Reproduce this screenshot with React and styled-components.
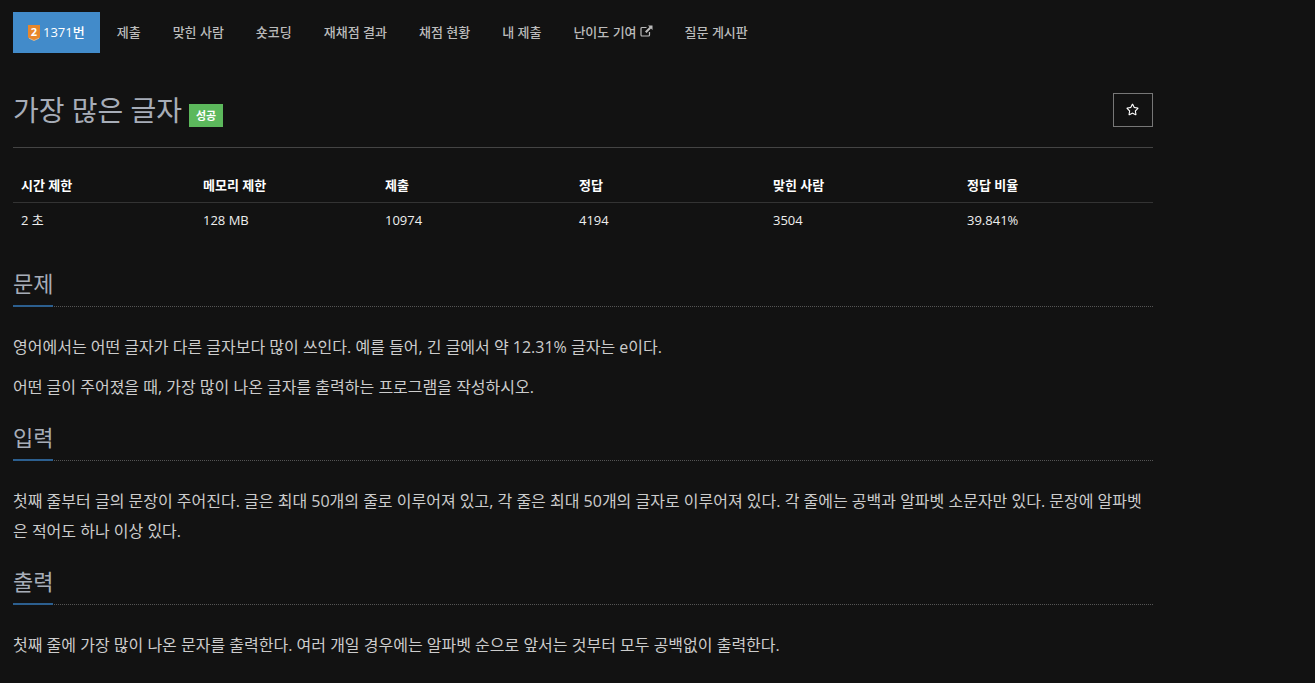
import React from "react";
import styled, { createGlobalStyle } from "styled-components";
import { FaRegStar } from "react-icons/fa";

const tabs = ["제출", "맞힌 사람", "숏코딩", "재채점 결과", "채점 현황", "내 제출"];

const stats = [
  { label: "시간 제한", value: "2 초", width: 182 },
  { label: "메모리 제한", value: "128 MB", width: 182 },
  { label: "제출", value: "10974", width: 194 },
  { label: "정답", value: "4194", width: 194 },
  { label: "맞힌 사람", value: "3504", width: 194 },
  { label: "정답 비율", value: "39.841%", width: 194 },
];

const App = () => {
  return (
    <Page>
      <GlobalStyle />
      <Nav>
        <ActiveTab>
          <TierBadge viewBox="0 0 12 16">
            <path d="M0 0h12v12.5L6 15.5 0 12.5z" fill="#e8872b" />
            <path d="M1 13.2l5 2.3 5-2.3" fill="none" stroke="#f7c48c" strokeWidth="0.8" />
            <text x="6" y="10.500" textAnchor="middle" fontSize="11" fontWeight="700" fill="#fff">
              2
            </text>
          </TierBadge>
          1371번
        </ActiveTab>
        {tabs.map((tab) => (
          <Tab key={tab}>{tab}</Tab>
        ))}
        <Tab>
          난이도 기여
          <LinkIcon viewBox="0 0 13 12">
            <path d="M9.5 7v3a1 1 0 0 1-1 1H2a1 1 0 0 1-1-1V3.5a1 1 0 0 1 1-1h4.500" fill="none" stroke="currentColor" strokeWidth="1.2" />
            <path d="M8 0.5h4.500V5L11 3.500 6.500 8 5 6.500 9.500 2z" fill="currentColor" />
          </LinkIcon>
        </Tab>
        <Tab>질문 게시판</Tab>
      </Nav>

      <Header>
        <Title>
          가장 많은 글자 <Label>성공</Label>
        </Title>
        <StarButton>
          <FaRegStar size={13} />
        </StarButton>
      </Header>

      <Stats>
        <thead>
          <tr>
            {stats.map((s) => (
              <Th key={s.label} style={{ width: s.width }}>
                {s.label}
              </Th>
            ))}
          </tr>
        </thead>
        <tbody>
          <tr>
            {stats.map((s) => (
              <Td key={s.label}>{s.value}</Td>
            ))}
          </tr>
        </tbody>
      </Stats>

      <Section>
        <Headline>
          <h2>문제</h2>
        </Headline>
        <Body>
          <p>영어에서는 어떤 글자가 다른 글자보다 많이 쓰인다. 예를 들어, 긴 글에서 약 12.31% 글자는 e이다.</p>
          <p>어떤 글이 주어졌을 때, 가장 많이 나온 글자를 출력하는 프로그램을 작성하시오.</p>
        </Body>
      </Section>

      <Section>
        <Headline>
          <h2>입력</h2>
        </Headline>
        <Body>
          <p>
            첫째 줄부터 글의 문장이 주어진다. 글은 최대 50개의 줄로 이루어져 있고, 각 줄은 최대 50개의 글자로 이루어져 있다. 각 줄에는 공백과 알파벳 소문자만 있다. 문장에 알파벳은 적어도 하나 이상 있다.
          </p>
        </Body>
      </Section>

      <Section>
        <Headline>
          <h2>출력</h2>
        </Headline>
        <Body>
          <p>첫째 줄에 가장 많이 나온 문자를 출력한다. 여러 개일 경우에는 알파벳 순으로 앞서는 것부터 모두 공백없이 출력한다.</p>
        </Body>
      </Section>
    </Page>
  );
};

const GlobalStyle = createGlobalStyle`
  html, body {
    margin: 0;
    padding: 0;
    background: #121212;
    height: 683px;
    overflow: hidden;
  }

  body {
    font-family: "Open Sans", "Noto Sans CJK KR", sans-serif;
    color: #ccc;
  }
`;

const Page = styled.div`
  width: 1140px;
  margin-left: 13px;
  padding-top: 12px;
`;

const Nav = styled.nav`
  display: flex;
  height: 41px;
`;

const Tab = styled.a`
  display: flex;
  align-items: center;
  gap: 2px;
  padding: 0 16px 2px;
  font-size: 13px;
  font-weight: 500;
  color: #bbb;
  white-space: pre;
`;

const ActiveTab = styled(Tab)`
  gap: 3px;
  margin-right: 1px;
  padding: 0 15px 2px;
  background: #428bca;
  color: #fff;
`;

const TierBadge = styled.svg`
  width: 12px;
  height: 16px;
  margin-top: 2px;
  overflow: visible;
`;

const LinkIcon = styled.svg`
  width: 13px;
  height: 12px;
  margin: -2px 0 0 1px;
`;

const Header = styled.div`
  display: flex;
  justify-content: space-between;
  align-items: flex-start;
  height: 94px;
  margin-bottom: 20px;
  border-bottom: 1px solid #444;
  box-sizing: content-box;
`;

const Title = styled.h1`
  margin: 38px 0 0;
  font-size: 28px;
  line-height: 38px;
  font-weight: 400;
  color: #a7adb8;
  white-space: pre;
`;

const Label = styled.span`
  display: inline-block;
  padding: 0 6.5px;
  height: 23px;
  line-height: 23px;
  background: #5cb85c;
  color: #fff;
  font-size: 11px;
  font-weight: 700;
  vertical-align: 1px;
`;

const StarButton = styled.button`
  display: flex;
  align-items: center;
  justify-content: center;
  width: 40px;
  height: 34px;
  margin-top: 40px;
  padding: 0 2px 2px 0;
  background: transparent;
  border: 1px solid #777;
  color: #fff;
`;

const Stats = styled.table`
  width: 1140px;
  margin-bottom: 30px;
  border-collapse: collapse;
  table-layout: fixed;
`;

const Th = styled.th`
  box-sizing: border-box;
  padding: 8px;
  font-size: 13px;
  font-weight: 700;
  line-height: 18px;
  text-align: left;
  color: #fff;
  border-bottom: 1px solid #333;
`;

const Td = styled.td`
  padding: 8px;
  font-size: 13px;
  line-height: 19px;
  color: #eee;
`;

const Section = styled.section`
  margin-top: 20px;
`;

const Headline = styled.div`
  border-bottom: 1px dotted #555;

  h2 {
    display: inline-block;
    margin: 0 0 -1px;
    padding-bottom: 7px;
    width: 40px;
    font-size: 22px;
    line-height: 30px;
    font-weight: 400;
    white-space: nowrap;
    color: #a7adb8;
    border-bottom: 2px solid #2c5f8f;
  }
`;

const Body = styled.div`
  padding-top: 25px;

  p {
    margin: 0 0 10px;
    font-size: 16px;
    line-height: 30px;
    color: #ccc;
  }
`;

export default App;
